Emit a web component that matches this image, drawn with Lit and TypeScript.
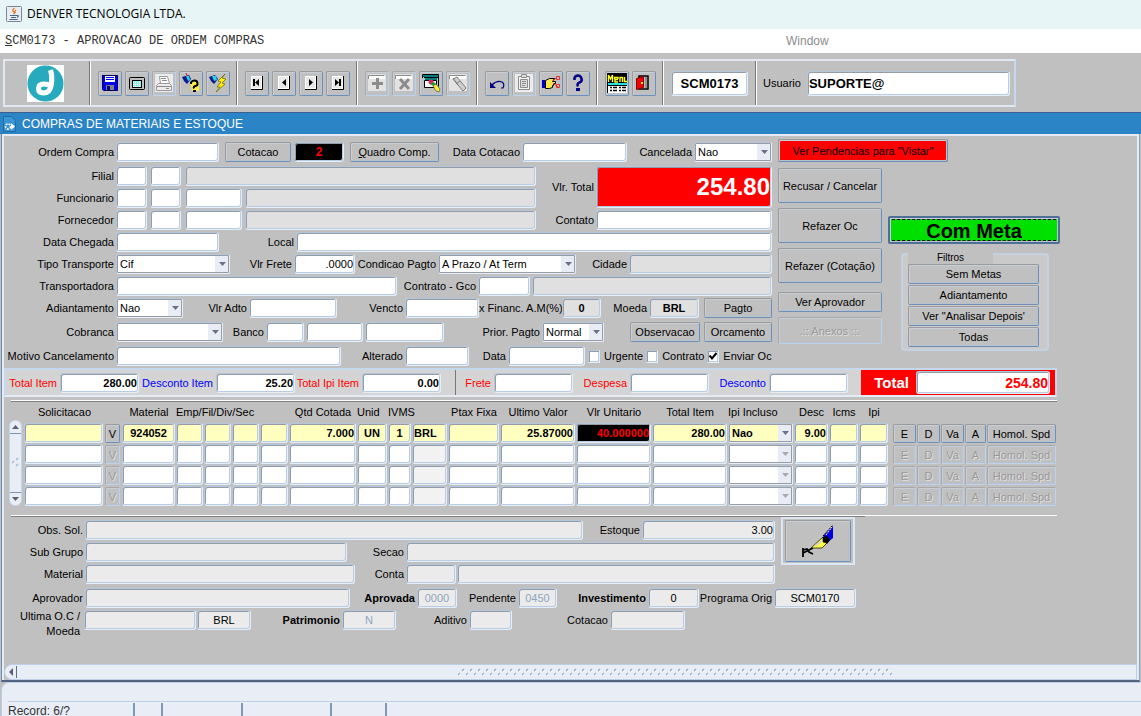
import { LitElement, html, css, svg, nothing, TemplateResult } from "lit";
import { customElement } from "lit/decorators.js";

type Tool = { name: string; icon: TemplateResult; off?: boolean };

const arrowIcon = (shape: TemplateResult) => svg`
  <path fill="#fff" d="M4 3h11v13H4z"/><path fill="#e8e8e8" d="M5 4h9v11H5z"/>
  <path fill="none" stroke="#000" d="M4 16.500h11.500V3"/>${shape}`;

const sheet = svg`<path fill="#e2e2e2" d="M1 1h18v17H1z"/><path fill="#fff" d="M2 2h16v4H2z"/><path fill="none" stroke="#8c8c8c" d="M1.500 6V2.500h16"/>`;

const fileTools: Tool[] = [
  { name: "Salvar", icon: svg`<path fill="#0000f0" d="M2 2h15l1 1v14H3l-1-1z"/><path fill="#fff" d="M5 2h10v7H5z"/><path fill="#0000f0" d="M6 4h8v1H6zM6 6h8v1H6z"/><path fill="#808080" d="M6 12h8v5H6z"/><path fill="#00008b" d="M7 13h3v4H7z"/><path fill="none" stroke="#000060" d="M2.500 2.500h15v15h-14l-1-1z"/>` },
  { name: "Tela", icon: svg`<rect x="2.500" y="4.500" width="15" height="12" rx="1" fill="#c0c0c0" stroke="#000"/><rect x="5.500" y="7.500" width="9" height="7" fill="#8ff0ee" stroke="#000"/><path stroke="#fff" stroke-dasharray="1 1" d="M6 9.500h8M6 11.500h8M6 13.500h8"/>` },
  { name: "Imprimir", off: true, icon: svg`<path fill="#ececec" d="M1 1h18v18H1z"/><path fill="#fff" stroke="#9a9a9a" d="M6.500 10.500l-1-7h8l2 7z"/><path stroke="#8a8a8a" d="M7 5.500h5M8 7.500h5M3 13.500h14M12 15.500h3"/><path fill="none" stroke="#999" d="M2.500 12.500l2-2h11l2 2v5h-15z"/>` },
  { name: "Consultar", icon: svg`<path fill="#ffee40" d="M9 9h9v9h-7z"/><path fill="#0b1b8c" d="M1 4l7-2 2 4-4 5-3-3z"/><path fill="#25d7e6" d="M5 3l3 0 1 4-2 1z"/><path stroke="#d22" d="M5 0l1 3"/><path fill="none" stroke="#000" stroke-width="2" d="M10 11V9.500q1-2 3.500-2t3 2.500-2 3-1.500 2.500"/><path fill="#000" d="M12 17h3v2h-3z"/>` },
  { name: "Executar consulta", icon: svg`<path fill="#0b1b8c" d="M1 4l6-2 3 4-4 5-3-3z"/><path fill="#25d7e6" d="M4 3l4 0 1 4-3 1z"/><path fill="#ffee10" stroke="#6b6200" stroke-width=".7" d="M17 1L10 8l3 1-4 5 3 0-4 5 9-8-3-1 4-4-4-1z"/>` },
];
const navTools: Tool[] = [
  { name: "Primeiro", icon: arrowIcon(svg`<path d="M6 6h2v7H6zM12 6v7L8 9.500z"/>`) },
  { name: "Anterior", icon: arrowIcon(svg`<path d="M12 6v7L8 9.500z"/>`) },
  { name: "Proximo", icon: arrowIcon(svg`<path d="M8 6v7l4-3.500z"/>`) },
  { name: "Ultimo", icon: arrowIcon(svg`<path d="M7 6v7l4-3.500zM11 6h2v7h-2z"/>`) },
];
const recordTools: Tool[] = [
  { name: "Inserir", off: true, icon: svg`${sheet}<path fill="#8c8c8c" d="M9 5h3v4h4v3h-4v4H9v-4H5V9h4z"/>` },
  { name: "Remover", off: true, icon: svg`${sheet}<path stroke="#8c8c8c" stroke-width="3" d="M6 6l9 10M15 6L6 16"/>` },
  { name: "Bloquear", icon: svg`<path fill="#007f80" d="M2 2h16v2H2z"/><path fill="none" stroke="#000" d="M1.500 5V1.500h16v12M17 4.500H3"/><path fill="#fff" stroke="#000" d="M3.500 7.500h12v7h-12z"/><path fill="#007f80" d="M4 5h12v2H4z"/><circle cx="10" cy="9" r="2.500" fill="#e02060"/><path fill="#19a030" d="M9 11l4-2 2 2-3 2z"/><path fill="#f4ec30" stroke="#444" stroke-width=".6" d="M12 13l3-2 4 5-1 3-3-1z"/>` },
  { name: "Limpar", off: true, icon: svg`${sheet}<path fill="#cfcfcf" stroke="#808080" d="M5 6l4-2 9 11-3 3z"/><path stroke="#808080" d="M5 5l5 7M12 8l-4 3"/>` },
];
const editTools: Tool[] = [
  { name: "Desfazer", icon: svg`<path fill="none" stroke="#00007f" stroke-width="1.200" d="M5 12q5-5 10-3 3 2 1 6h-2"/><path fill="#00007f" d="M3 9v6h6z"/>` },
  { name: "Colar", off: true, icon: svg`<path fill="#ececec" d="M1 1h18v18H1z"/><path fill="#f4f4f4" stroke="#8c8c8c" d="M4.500 3.500h11v13h-11z"/><path fill="#ddd" stroke="#8c8c8c" d="M7.500 1.500h5v3h-5zM6.500 6.500h7v8h-7z"/><path stroke="#8c8c8c" d="M8 8.500h4M8 10.500h4M8 12.500h3"/>` },
  { name: "Cortar", icon: svg`<path fill="#0000c8" d="M1 7h3v8H1z"/><path fill="#ffe94a" stroke="#000" d="M4.500 7.500l4-2h5l-2 3h3v2h-2v2h-1v2l-3 1h-4z"/><path fill="none" stroke="#e03030" d="M12 8l5-5M12 10l5 4M15.500 3.500h3v3h-3zM15.500 11.500h3v3h-3z"/>` },
  { name: "Ajuda", icon: svg`<path fill="none" stroke="#00008b" stroke-width="2.500" d="M6.500 7V5q1-2.500 3.500-2.500t3.500 3-2 4-1.500 4"/><path fill="#00008b" d="M8 15h4v3H8z"/>` },
];
const exitTools: Tool[] = [
  { name: "Menu", icon: svg`<path fill="#000" d="M0 0h20v20H0z"/><path fill="none" stroke="#ffff20" stroke-width="1.400" d="M1.500 9V2l2 4 2-4v7M11 6.500H8V9h3M7.500 6V4.500H11V6M13 9V4.500h2.500V9M17.500 4v4.500H20"/><path fill="#20e0e0" d="M1 10h19v2H1z"/><path fill="#fff" d="M1 13h19v7H1z"/><path stroke="#000" stroke-width="1.500" d="M3 14.500h2M6 14.500h4M12 14.500h2M15 14.500h4M3 17.500h2M6 17.500h4M12 17.500h2M15 17.500h4"/>` },
  { name: "Sair", icon: svg`<path fill="#c0c0c0" stroke="#000" stroke-width="1.500" d="M5 3h9v13H5z"/><path fill="#f00000" stroke="#800" d="M2.500 5.500l7-2v11l-7 2z"/><path fill="#ff0" d="M7 9h2v2H7z"/><path fill="#909090" d="M11 4h2v11h-2z"/>` },
];

interface Cell { name: string; cls?: string }
const cols: Cell[] = [
  { name: "Material", cls: "b mid" }, { name: "Emp" }, { name: "Fil" }, { name: "Div" }, { name: "Sec" },
  { name: "Qtd Cotada", cls: "b num" }, { name: "Unid", cls: "b mid" }, { name: "IVMS", cls: "b mid" },
  { name: "Moeda", cls: "b cur" }, { name: "Ptax Fixa" }, { name: "Ultimo Valor", cls: "b num" },
  { name: "Vlr Unitario", cls: "b num unit" }, { name: "Total Item", cls: "b num" },
];
const items: (string[] | null)[] = [
  ["924052", "", "", "", "", "7.000", "UN", "1", "BRL", "", "25.87000", "40.000000", "280.00"],
  null, null, null,
];

@customElement("app-root")
export class AppRoot extends LitElement {
  static styles = css`
    :host { display: block; font: 11px/14px "Liberation Sans", Arial, sans-serif; color: #000; }
    * { box-sizing: border-box; }
    .app { min-height: 100vh; display: flex; flex-direction: column; background: #c0c0c0; }
    .title { height: 29px; display: flex; align-items: center; gap: 5px; padding: 0 6px 2px; background: #e8f5f6; font: 12px/16px "Open Sans", "Noto Sans", sans-serif; }
    .menu { height: 24px; display: grid; grid-template-columns: 11fr 5fr; align-items: center; padding-left: 5px; background: #fff; color: #8c8c8c; font-size: 12px; }
    .menu .prog { font-family: "Liberation Mono", monospace; color: #333; white-space: nowrap; }
    .menu a { color: inherit; text-decoration: none; }
    .menu u, button u { text-decoration: underline; }

    .tools { width: 1013px; max-width: 100%; height: 48px; margin: 6px 0 5px 3px; display: flex; border: 2px solid #c6d8ee; border-color: #dfe8f4 #c6d8ee #dfe8f4 #dfe8f4; }
    .group { display: flex; align-items: center; gap: 3px; padding: 0 7px; border-right: 1px solid #fff; box-shadow: inset -1px 0 #777; }
    .group.brand { padding: 0 26px 0 22px; }
    .group.code { padding: 0 8px 0 7px; }
    .group.user { flex: 1; border: 0; box-shadow: none; gap: 4px; padding: 0 4px 0 6px; }
    .group svg { display: block; }
    .tool { width: 24px; height: 25px; padding: 1px; }
    .group input { height: 25px; font-size: 13px; font-weight: bold; }
    .group.code input { width: 77px; text-align: center; }

    .caption { height: 22px; display: flex; align-items: center; gap: 6px; padding-left: 3px; background: #2b84c5; border-top: 1px solid #3c5f8c; color: #fff; font-size: 12px; }
    .frame { flex: 1; display: flex; flex-direction: column; margin: 0 1px; border-left: 1px solid #6f8fb0; border-right: 1px solid #8aa4c4; border-bottom: 2px solid #52647e; box-shadow: inset 2px 2px #e4ebf4, inset -2px 0 #e4ebf4; padding: 5px 2px 0; }

    input, select, button { font: inherit; color: inherit; margin: 0; min-width: 0; }
    input { width: 100%; height: 20px; padding: 0 1px; border: 1px solid; border-color: #b4c6db #e6eef8 #e6eef8 #b4c6db; border-radius: 3px; box-shadow: inset 1px 1px #969ca6, inset -1px -1px #b8cce4; background: #fff; outline: 0; }
    select { appearance: none; width: 100%; height: 20px; padding: 0 16px 0 3px; border: 1px solid; border-color: #b4c6db #e6eef8 #e6eef8 #b4c6db; border-radius: 2px; box-shadow: inset 0 0 0 1px #989ca4; outline: 0;
      background: url("data:image/svg+xml,%3Csvg xmlns='http://www.w3.org/2000/svg' width='14' height='18'%3E%3Cpath fill='%23e8edf5' d='M0 0h14v18H0z'/%3E%3Cpath fill='%236b7088' d='M4 7h7L7.500 11z'/%3E%3C/svg%3E") right center no-repeat #fff; }
    select:disabled { opacity: 1; background-image: url("data:image/svg+xml,%3Csvg xmlns='http://www.w3.org/2000/svg' width='14' height='18'%3E%3Cpath fill='%23e8edf5' d='M0 0h14v18H0z'/%3E%3Cpath fill='%23aaa' d='M4 7h7L7.500 11z'/%3E%3C/svg%3E"); }
    button { padding: 0; height: 20px; background: #c0c0c0; border: 1px solid; border-color: #9b9b9b #6f90b4 #6f90b4 #9b9b9b; border-radius: 2px; box-shadow: inset 1px 1px #c8ced6, inset -1px -1px #b4c2d2; white-space: nowrap; }
    button:disabled { color: #999; text-shadow: 1px 1px #e0e0e0; border-color: #a8a8a8 #c0d2e6 #c0d2e6 #a8a8a8; }
    label { text-align: right; padding-right: 2px; white-space: nowrap; align-self: center; }
    .ro { background: #e0e0e0; }
    .lo .ro { background: #ebebeb; }
    .b { font-weight: bold; }
    .num { text-align: right; }
    .mid { text-align: center; }
    .dim { color: #8fa5bf; }

    .top { display: grid; grid-template-columns: minmax(0, 1fr) 359px; column-gap: 6px; }
    .form { display: flex; flex-direction: column; gap: 4px; padding-top: 3px; }
    .rows { display: flex; flex-direction: column; gap: 2px; }
    .row { display: grid; align-items: center; }
    .r1 { grid-template-columns: 112px 103px 6px 66px 3px 50px 6px 89px 1fr 105px 67px 78px; }
    .who { display: grid; grid-template-columns: minmax(0, 1fr) 60px 176px; }
    .r2 { grid-template-columns: 112px 31px 3px 31px 4px 1fr; }
    .r3 { grid-template-columns: 112px 31px 3px 31px 4px 57px 3px 1fr; }
    .r4 { grid-template-columns: 112px 103px 77px 1fr; }
    .r5 { grid-template-columns: 112px 114px 64px 61px 83px 138px 53px 1fr; }
    .r6 { grid-template-columns: 112px 1fr 81px 52px 2px 240px; }
    .r7 { grid-template-columns: 112px 67px 66px 1fr 68px 74px 83px 39px 48px 50px 5px 68px; }
    .r8 { grid-template-columns: 112px 107px 43px 38px 2px 57px 2px 79px 1fr 62px 26px 70px 4px 68px; }
    .r9 { grid-template-columns: 112px 1fr 64px 64px 39px 77px 187px; }
    .clip { overflow: hidden; }
    .alert { background: #000; color: #f00; font-size: 12px; }
    input.grand { height: 42px; background: #f00; color: #fff; font-size: 24px; }
    .checks { display: flex; align-items: center; gap: 3px; padding-left: 3px; }
    .checks label { display: flex; align-items: center; gap: 4px; padding: 0; }
    .checks input { appearance: none; width: 12px; height: 13px; border-radius: 0; }
    .checks input:checked { background: url("data:image/svg+xml,%3Csvg xmlns='http://www.w3.org/2000/svg' width='10' height='10'%3E%3Cpath fill='none' stroke='%23000' stroke-width='2' d='M1.500 4.500l2.500 3L8.500 2'/%3E%3C/svg%3E") center no-repeat #fff; }

    .side { display: flex; flex-direction: column; gap: 6px; }
    .warn { width: 170px; height: 23px; background: #f00; }
    .sides { display: grid; grid-template-columns: 104px 172px; column-gap: 6px; }
    .acts { display: flex; flex-direction: column; gap: 5px; }
    .acts button { height: 35px; }
    .acts .short { height: 20px; margin-top: 4px; }
    .acts .mild { height: 27px; }
    .metas { padding-top: 48px; }
    .meta { display: block; width: 100%; height: 28px; background: #00e000; border: 2px solid #4f6f96; font-size: 20px; font-weight: bold; padding: 0 2px; }
    .meta span { display: block; line-height: 22px; height: 22px; border: dashed #000; border-width: 1px 0; }
    .filters { margin: 9px 11px 0 13px; padding: 0 8px 2px 5px; border: 2px solid #c4d2e2; border-radius: 4px; background: #cacaca; display: flex; flex-direction: column; gap: 1px; }
    .filters h2 { margin: -2px 46px -1px 0; height: 11px; background: #c0c0c0; font: 10px/10px "Liberation Sans", sans-serif; text-align: center; }

    .lower { margin-right: 80px; }
    .totals { display: grid; grid-template-columns: 450px minmax(0, 1fr) 194px; height: 29px; margin-top: 2px; background: #d4d4d4; border: 2px solid; border-color: #c6d8ee #c6d8ee #e4ecf6; }
    .totals .t { display: grid; align-items: center; height: 25px; }
    .totals label { padding-right: 3px; color: #f00; }
    .totals .blue { color: #00f; }
    .t1 { grid-template-columns: 54px 79px 77px 79px 67px 79px; border-right: 1px solid #777; }
    .t2 { grid-template-columns: 38px 79px 57px 79px 60px 79px; }
    .t3 { grid-template-columns: 55px 134px; background: #f00; font-size: 15px; }
    .totals .t3 label { color: #fff; padding-right: 7px; }
    .t3 input { color: #f00; font-size: 14px; height: 23px; }
    hr { height: 2px; margin: 3px 0 2px 7px; border: 0; background: linear-gradient(#fff 50%, #808080 50%); }

    .grid { display: grid; grid-template-columns: 13px minmax(0, 1fr); column-gap: 2px; padding-left: 5px; }
    .vbar { align-self: end; height: 86px; display: flex; flex-direction: column; justify-content: space-between; background: #e9eef6; border: 1px solid #c6d4e6; border-radius: 6px; }
    .vbar svg, .hbar svg { display: block; }
    table { width: 100%; table-layout: fixed; border-collapse: collapse; }
    th { font-weight: normal; height: 18px; padding: 0 0 3px; white-space: nowrap; line-height: 12px; }
    th.l { text-align: left; }
    td { padding: 1px 1px 0 0; height: 21px; vertical-align: bottom; }
    td button { display: block; width: 100%; height: 19px; }
    td:first-child { padding-right: 2px; }
    td.v { padding-right: 2px; }
    td.first { padding-left: 4px; }
    td input, td select { display: block; }
    .on input, .on select { background-color: #ffffc0; }
    .on input.unit { background: #000; color: #f00; }
    .off .cur { background: #f2f2f2; }
    .c81 { width: auto; } .c17 { width: 17px; } .c54 { width: 54px; } .c28 { width: 28px; } .c29 { width: 29px; }
    .c68 { width: 68px; } .c31 { width: 31px; } .c24 { width: 24px; } .c36 { width: 36px; } .c52 { width: 52px; }
    .c76 { width: 76px; } .c66 { width: 66px; } .c35 { width: 35px; } .c30 { width: 30px; } .c22 { width: 22px; } .c70 { width: 70px; }

    .grid + hr { margin-top: 9px; background: linear-gradient(#808080, #808080) 0 1px / 854px 1px no-repeat, linear-gradient(#fff, #fff) 0 0 / 100% 1px no-repeat; }
    .lo { display: grid; grid-template-columns: minmax(0, 771px) 74px; column-gap: 6px; margin-top: 3px; }
    .lo .rows, .tail { gap: 2px; }
    .l1 { grid-template-columns: 81px 1fr 59px 133px; }
    .l2 { grid-template-columns: 81px 262px 59px 1fr; }
    .l3 { grid-template-columns: 81px 270px 51px 50px 1px 1fr; }
    .l4 { grid-template-columns: 81px 265px 67px 40px 61px 39px 91px 51px 75px 82px; }
    .l5 { grid-template-columns: 80px 112px 1px 54px 91px 54px 73px 43px 98px 75px; align-items: start; }
    .l5 label { line-height: 15px; align-self: start; padding-top: 3px; }
    .l5 .two { white-space: normal; margin-top: -4px; padding-right: 4px; }
    .tail { display: flex; flex-direction: column; margin-top: 4px; grid-column: 1 / -1; }
    .sign { align-self: start; height: 48px; padding: 1px 2px; border: 2px solid #dce6f2; margin-top: -3px; }
    .sign button { display: block; width: 100%; height: 42px; }
    .sign svg { display: block; margin: auto; }

    .hbar { margin-top: auto; height: 16px; display: flex; align-items: center; background: #e9eef6; border: 1px solid #bccfe6; border-radius: 8px 0 0 8px; }
    .hbar .knob { height: 12px; width: 10px; margin: 0 auto 0 2px; border-right: 1px solid #5b7189; }
    .hbar .grip { width: 436px; height: 8px; margin-right: 242px; }
    .status { height: 34px; padding: 18px 0 0 6px; background: #e9eef6; border: 1px solid #bccfe6; border-right: 0; border-bottom: 0; border-radius: 8px 0 0 0; margin-left: 1px; }
    .cells { display: grid; grid-template-columns: 127px 28px 80px 89px 55px 1fr; border-top: 1px solid #bccfe6; font-size: 12px; line-height: 16px; color: #333; }
    .cells span { height: 14px; margin-top: 1px; border-right: 2px solid #7f9ab8; white-space: nowrap; }
    .cells span:last-child { border: 0; }
  `;

  private f(id: string, value = "", cls = "") {
    return html`<input id=${id} class=${cls} .value=${value} ?readonly=${cls.includes("ro")} />`;
  }
  private l(id: string, text: string, cls = "") {
    return html`<label for=${id} class=${cls}>${text}</label>`;
  }
  private s(id: string, value: string) {
    return html`<select id=${id}><option>${value}</option></select>`;
  }
  private tools(list: Tool[]) {
    return html`<div class="group">${list.map(
      (t) => html`<button class="tool" aria-label=${t.name} ?disabled=${!!t.off}><svg width="20" height="20" viewBox="0 0 20 20">${t.icon}</svg></button>`
    )}</div>`;
  }

  private toolbar() {
    return html`<div class="tools">
      <div class="group brand">
        <svg width="37" height="37" viewBox="0 0 37 37"><path fill="#fff" d="M0 0h37v37H0z"/><circle cx="18.500" cy="18.500" r="18" fill="#27aabd"/><path fill="none" stroke="#fff" stroke-width="5" d="M23.500 5q2 6 1 13-1 10-8 10-5 0-5-4.500T17 19q4 0 7 2"/></svg>
      </div>
      ${this.tools(fileTools)}${this.tools(navTools)}${this.tools(recordTools)}${this.tools(editTools)}${this.tools(exitTools)}
      <div class="group code"><input aria-label="Programa" .value=${"SCM0173"} /></div>
      <div class="group user">${this.l("usuario", "Usuario")}${this.f("usuario", "SUPORTE@")}</div>
    </div>`;
  }

  private form() {
    const gap = html`<span></span>`;
    return html`<div class="form">
      <div class="row r1">
        ${this.l("oc", "Ordem Compra")}${this.f("oc")}${gap}<button>Cotacao</button>${gap}<input aria-label="Cotacoes" class="alert b mid" .value=${"2"} />${gap}
        <button><u>Q</u>uadro Comp.</button>${this.l("dc", "Data Cotacao")}${this.f("dc")}${this.l("canc", "Cancelada")}${this.s("canc", "Nao")}
      </div>
      <div class="rows">
        <div class="who">
          <div class="rows">
            <div class="row r2">${this.l("fil1", "Filial")}${this.f("fil1")}${gap}${this.f("fil2")}${gap}${this.f("fil3", "", "ro")}</div>
            <div class="row r3">${this.l("fun1", "Funcionario")}${this.f("fun1")}${gap}${this.f("fun2")}${gap}${this.f("fun3")}${gap}${this.f("fun4", "", "ro")}</div>
          </div>
          ${this.l("vt", "Vlr. Total")}${this.f("vt", "254.80", "grand b num")}
        </div>
        <div class="who">
          <div class="row r3">${this.l("for1", "Fornecedor")}${this.f("for1")}${gap}${this.f("for2")}${gap}${this.f("for3")}${gap}${this.f("for4", "", "ro")}</div>
          ${this.l("cont", "Contato")}${this.f("cont")}
        </div>
        <div class="row r4">${this.l("cheg", "Data Chegada")}${this.f("cheg")}${this.l("loc", "Local")}${this.f("loc")}</div>
        <div class="row r5">
          ${this.l("tt", "Tipo Transporte")}${this.s("tt", "Cif")}${this.l("vf", "Vlr Frete")}${this.f("vf", ".0000", "num")}
          ${this.l("cp", "Condicao Pagto")}${this.s("cp", "A Prazo / At Term")}${this.l("cid", "Cidade")}${this.f("cid", "", "ro")}
        </div>
        <div class="row r6">${this.l("tr", "Transportadora")}${this.f("tr")}${this.l("gco", "Contrato - Gco")}${this.f("gco")}${gap}${this.f("gco2", "", "ro")}</div>
        <div class="row r7">
          ${this.l("ad", "Adiantamento")}${this.s("ad", "Nao")}${this.l("va", "Vlr Adto")}${this.f("va")}${this.l("ve", "Vencto")}${this.f("ve")}
          ${this.l("tx", "x Financ. A.M(%)", "clip")}${this.f("tx", "0", "ro b mid")}${this.l("mo", "Moeda")}${this.f("mo", "BRL", "ro b mid")}${gap}<button>Pagto</button>
        </div>
      </div>
      <div class="row r8">
        ${this.l("cob", "Cobranca")}${this.s("cob", "")}${this.l("ban", "Banco")}${this.f("ban")}${gap}${this.f("ban2")}${gap}${this.f("ban3")}
        ${this.l("pp", "Prior. Pagto")}${this.s("pp", "Normal")}${gap}<button>Observacao</button>${gap}<button>Orcamento</button>
      </div>
      <div class="row r9">
        ${this.l("mc", "Motivo Cancelamento")}${this.f("mc")}${this.l("alt", "Alterado")}${this.f("alt")}${this.l("dt", "Data")}${this.f("dt")}
        <div class="checks">
          <label><input type="checkbox" />Urgente</label><label><input type="checkbox" />Contrato</label><label><input type="checkbox" checked />Enviar Oc</label>
        </div>
      </div>
    </div>`;
  }

  private side() {
    return html`<div class="side">
      <button class="warn">Ver Pendencias para "Vistar"</button>
      <div class="sides">
        <div class="acts">
          <button>Recusar / Cancelar</button><button>Refazer Oc</button><button>Refazer (Cotação)</button>
          <button class="short">Ver Aprovador</button><button class="mild" disabled>.:: Anexos ::.</button>
        </div>
        <div class="metas">
          <button class="meta"><span>Com Meta</span></button>
          <div class="filters"><h2>Filtros</h2><button>Sem Metas</button><button>Adiantamento</button><button>Ver "Analisar Depois'</button><button>Todas</button></div>
        </div>
      </div>
    </div>`;
  }

  private table() {
    const widths = [81, 17, 54, 28, 28, 28, 29, 68, 31, 24, 36, 52, 76, 76, 76, 66, 35, 30, 30, 28, 24, 24, 22, 70];
    return html`<div class="grid">
      <div class="vbar">
        <svg width="11" height="13" viewBox="0 0 11 13"><path fill="#5b6078" d="M2 8h7L5.500 4z"/><path fill="#7f93aa" d="M0 12h11v1H0z"/></svg>
        <svg width="11" height="12" viewBox="0 0 11 12"><path stroke="#9db2cb" stroke-width="1.200" d="M6 3l2-2M2 6l2-2M6 9l2-2"/></svg>
        <svg width="11" height="13" viewBox="0 0 11 13"><path fill="#5b6078" d="M2 5h7L5.500 9z"/><path fill="#7f93aa" d="M0 0h11v1H0z"/></svg>
      </div>
      <table>
        <colgroup>${widths.map((w) => html`<col class="c${w}" />`)}</colgroup>
        <thead><tr>
          <th>Solicitacao</th><th></th><th>Material</th><th class="l" colspan="4">Emp/Fil/Div/Sec</th><th>Qtd Cotada</th><th class="l">Unid</th><th colspan="2" class="l">IVMS</th>
          <th>Ptax Fixa</th><th>Ultimo Valor</th><th>Vlr Unitario</th><th>Total Item</th><th class="l">Ipi Incluso</th><th>Desc</th><th>Icms</th><th>Ipi</th><th colspan="5"></th>
        </tr></thead>
        <tbody>${items.map((row) => html`<tr class=${row ? "on" : "off"}>
          <td><input aria-label="Solicitacao" /></td>
          <td class="v"><button ?disabled=${!row}>V</button></td>
          ${cols.map((c, i) => html`<td><input aria-label=${c.name} class=${c.cls ?? nothing} .value=${row ? row[i] : ""} /></td>`)}
          <td><select aria-label="Ipi Incluso" class="b" ?disabled=${!row}><option>${row ? "Nao" : ""}</option></select></td>
          <td><input aria-label="Desc" class="b num" .value=${row ? "9.00" : ""} /></td>
          <td><input aria-label="Icms" /></td><td><input aria-label="Ipi" /></td>
          ${["E", "D", "Va", "A", "Homol. Spd"].map((t, i) => html`<td class=${i ? "" : "first"}><button ?disabled=${!row}>${t}</button></td>`)}
        </tr>`)}</tbody>
      </table>
    </div>`;
  }

  private details() {
    const gap = html`<span></span>`;
    return html`<div class="lo">
      <div class="rows">
        <div class="row l1">${this.l("obs", "Obs. Sol.")}${this.f("obs", "", "ro")}${this.l("est", "Estoque")}${this.f("est", "3.00", "ro num")}</div>
        <div class="row l2">${this.l("sub", "Sub Grupo")}${this.f("sub", "", "ro")}${this.l("sec", "Secao")}${this.f("sec", "", "ro")}</div>
        <div class="row l3">${this.l("mat", "Material")}${this.f("mat", "", "ro")}${this.l("cta", "Conta")}${this.f("cta", "", "ro")}${gap}${this.f("cta2", "", "ro")}</div>
      </div>
      <div class="sign"><button aria-label="Assinar">
        <svg width="36" height="36" viewBox="0 0 36 36"><path fill="#0000e0" d="M33 3v12l-5 4-5-6z"/><path fill="none" stroke="#000" stroke-dasharray="2 1" d="M23 13L32.500 2.500"/><path stroke="#fff" stroke-dasharray="2 1" d="M26 12l6-8"/><path fill="#000" d="M23 14l4-1 3 4-3 4-5-2z"/><path fill="#ffff40" stroke="#000" stroke-width=".7" d="M10 26l13-12 0 5 4 1-5 5h-8z"/><path stroke="#d8d8c0" stroke-width="2" d="M15 23l7-5"/><path fill="none" stroke="#000" stroke-width="1.800" d="M3 34v-9M3 27l4-1 2 3 4 2M3 30l10-5"/></svg>
      </button></div>
      <div class="tail">
        <div class="row l4">
          ${this.l("apr", "Aprovador")}${this.f("apr", "", "ro")}${this.l("apd", "Aprovada", "b")}${this.f("apd", "0000", "ro mid dim")}${this.l("pen", "Pendente")}${this.f("pen", "0450", "ro mid dim")}
          ${this.l("inv", "Investimento", "b")}${this.f("inv", "0", "ro mid")}${this.l("pro", "Programa Orig")}${this.f("pro", "SCM0170", "ro mid")}
        </div>
        <div class="row l5">
          ${this.l("ult", "Ultima O.C / Moeda", "two")}${this.f("ult", "", "ro")}${gap}${this.f("ult2", "BRL", "ro mid")}${this.l("pat", "Patrimonio", "b")}${this.f("pat", "N", "ro mid dim")}
          ${this.l("adi", "Aditivo")}${this.f("adi", "", "ro")}${this.l("cot", "Cotacao")}${this.f("cot", "", "ro")}
        </div>
      </div>
    </div>`;
  }

  render() {
    return html`<div class="app">
      <header class="title">
        <svg width="16" height="16" viewBox="0 0 16 16"><rect x=".5" y=".5" width="15" height="15" rx="1" fill="#e9edf2" stroke="#7b8794"/><path fill="none" stroke="#e8761c" stroke-width="1.300" d="M8.500 2q-3 2-1 3.500t0 2.500M10 4q-2 1.500-.500 3"/><path fill="none" stroke="#45678c" stroke-width="1.200" d="M4 9.500h7.500q2 .3-.5 2M5 11.500h5M3.500 13.500h8"/></svg>
        DENVER TECNOLOGIA LTDA.
      </header>
      <nav class="menu"><span class="prog"><u>S</u>CM0173 - APROVACAO DE ORDEM COMPRAS</span><a href="#">Window</a></nav>
      ${this.toolbar()}
      <div class="caption">
        <svg width="13" height="16" viewBox="0 0 13 16"><path fill="#3a93d2" stroke="#1e6ca8" d="M.500.500h8l4 4v11H.500z"/><path fill="#fff" d="M8 7l4 3.500L8 14z"/><circle cx="5" cy="10.500" r="2.500" fill="none" stroke="#fff" stroke-width="1.500" stroke-dasharray="2 1"/></svg>
        COMPRAS DE MATERIAIS E ESTOQUE
      </div>
      <main class="frame">
        <div class="top">${this.form()}${this.side()}</div>
        <div class="lower">
          <div class="totals">
            <div class="t t1">${this.l("ti", "Total Item")}${this.f("ti", "280.00", "b num")}${this.l("di", "Desconto Item", "blue")}${this.f("di", "25.20", "b num")}${this.l("ii", "Total Ipi Item")}${this.f("ii", "0.00", "b num")}</div>
            <div class="t t2">${this.l("fr", "Frete")}${this.f("fr")}${this.l("de", "Despesa")}${this.f("de")}${this.l("ds", "Desconto", "blue")}${this.f("ds")}</div>
            <div class="t t3">${this.l("tot", "Total", "b")}${this.f("tot", "254.80", "b num")}</div>
          </div>
          <hr />
          ${this.table()}
          <hr />
          ${this.details()}
        </div>
        <div class="hbar">
          <span class="knob"><svg width="8" height="12" viewBox="0 0 8 12"><path fill="#5b6078" d="M6 2v8L2 6z"/></svg></span>
          <svg class="grip"><defs><pattern id="dots" width="8" height="8" patternUnits="userSpaceOnUse"><path stroke="#8fa8c4" stroke-width="1.200" d="M0 7l2-2M4 3l2-2"/><path stroke="#fff" d="M1 8l2-2M5 4l2-2"/></pattern></defs><path fill="url(#dots)" d="M0 0h436v8H0z"/></svg>
        </div>
      </main>
      <footer class="status"><div class="cells"><span>Record: 6/?</span><span></span><span></span><span></span><span></span><span></span></div></footer>
    </div>`;
  }
}
